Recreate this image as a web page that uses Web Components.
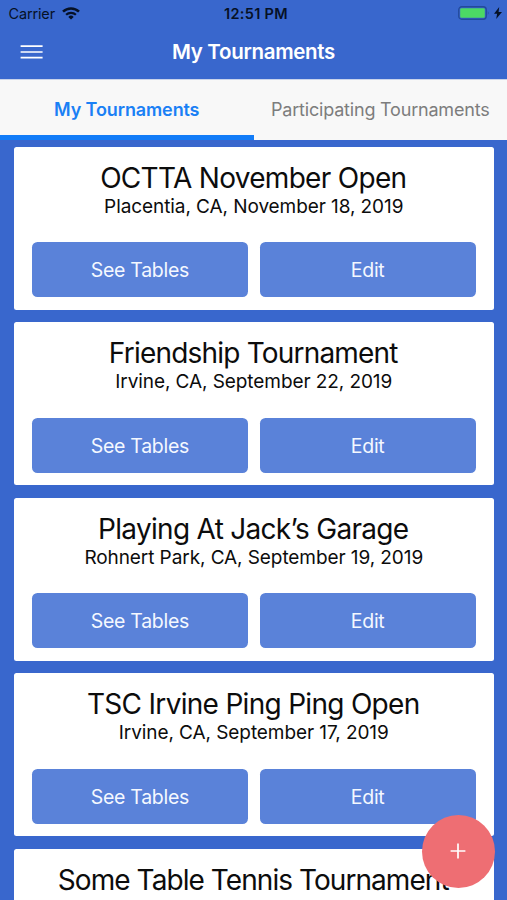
<!DOCTYPE html>
<html lang="en">
<head>
<meta charset="utf-8">
<title>My Tournaments</title>
<style>
  html, body { margin: 0; height: 100%; overflow: hidden; }
  body { font-family: Inter, "Liberation Sans", sans-serif; background: #3967cd; }
</style>
</head>
<body>
<tournament-app>
  <status-bar slot="top" carrier="Carrier" time="12:51 PM"></status-bar>
  <nav-header slot="top">My Tournaments</nav-header>
  <tab-bar slot="top">
    <tab-item active>My Tournaments</tab-item>
    <tab-item>Participating Tournaments</tab-item>
  </tab-bar>
  <tournament-card>
    OCTTA November Open
    <span slot="place">Placentia, CA, November 18, 2019</span>
  </tournament-card>
  <tournament-card style="--title-spacing: -0.8px">
    Friendship Tournament
    <span slot="place">Irvine, CA, September 22, 2019</span>
  </tournament-card>
  <tournament-card>
    Playing At Jack’s Garage
    <span slot="place">Rohnert Park, CA, September 19, 2019</span>
  </tournament-card>
  <tournament-card>
    TSC Irvine Ping Ping Open
    <span slot="place">Irvine, CA, September 17, 2019</span>
  </tournament-card>
  <tournament-card collapsed style="--title-spacing: -0.94px">
    Some Table Tennis Tournament
  </tournament-card>
  <add-button slot="fab"></add-button>
</tournament-app>

<script>
  // Every element here is static markup + styles, so one helper is enough.
  function define(name, html, setup) {
    const template = document.createElement('template');
    template.innerHTML = html;
    customElements.define(name, class extends HTMLElement {
      constructor() {
        super();
        this.attachShadow({ mode: 'open' });
        this.shadowRoot.appendChild(template.content.cloneNode(true));
      }
      connectedCallback() {
        if (setup) setup(this, this.shadowRoot);
      }
    });
  }

  define('tournament-app', `
    <style>
      :host {
        display: flex;
        flex-direction: column;
        height: 900px;
        overflow: hidden;
        position: relative;
        background: #3967cd;
      }
      main {
        flex: 1;
        min-height: 0;
        overflow: hidden;
        display: flex;
        flex-direction: column;
        gap: 12.5px;
        padding: 6.5px 13px 0 13.5px;
      }
    </style>
    <slot name="top"></slot>
    <main><slot></slot></main>
    <slot name="fab"></slot>
  `);

  define('status-bar', `
    <style>
      :host {
        display: grid;
        grid-template-columns: 1fr auto 1fr;
        align-items: center;
        flex: none;
        height: 27px;
        padding: 0 5px 0 8.5px;
        color: #061126;
        font-size: 14.5px;
      }
      .left, .right { display: flex; align-items: center; }
      .left { gap: 7px; }
      .carrier { letter-spacing: -0.15px; }
      .right { justify-content: flex-end; gap: 4px; }
      .time { font-weight: 600; letter-spacing: 0.3px; padding-left: 1.5px; }
      svg { display: block; margin-bottom: 1px; }
    </style>
    <div class="left">
      <span class="carrier"></span>
      <svg width="18" height="13" viewBox="0 0 18 13" fill="none" stroke="currentColor">
        <path d="M1 4.7a11.4 11.4 0 0 1 16 0" stroke-width="2.5"/>
        <path d="M4.1 7.8a7 7 0 0 1 9.8 0" stroke-width="2.2"/>
        <path d="M9 12.6 6.3 9.9a3.9 3.9 0 0 1 5.4 0z" fill="currentColor" stroke="none"/>
      </svg>
    </div>
    <span class="time"></span>
    <div class="right">
      <svg width="32" height="14" viewBox="0 0 32 14">
        <rect x=".75" y=".75" width="27.5" height="12.5" rx="3" fill="none" stroke="#234a9a" stroke-width="1.3"/>
        <rect x="2.2" y="2.2" width="24.6" height="9.6" rx="1.4" fill="#4cd964"/>
        <path d="M29.8 4.8q1.6 2.2 0 4.4z" fill="#234a9a"/>
      </svg>
      <svg width="8" height="12" viewBox="0 0 8 12">
        <path d="M5.2 0 0 6.8h3.1L2.2 12 8 4.9H4.6z" fill="currentColor"/>
      </svg>
    </div>
  `, (host, root) => {
    root.querySelector('.carrier').textContent = host.getAttribute('carrier');
    root.querySelector('.time').textContent = host.getAttribute('time');
  });

  define('nav-header', `
    <style>
      :host {
        display: grid;
        grid-template-columns: 1fr auto 1fr;
        align-items: center;
        flex: none;
        height: 51.5px;
        padding: 0 20px 2px;
        box-sizing: border-box;
        color: #fff;
      }
      h1 {
        margin: 0;
        font-size: 20.5px;
        line-height: 24px;
        font-weight: 600;
        letter-spacing: -0.3px;
      }
      svg { display: block; }
    </style>
    <svg width="23" height="16" viewBox="0 0 23 16" stroke="#fff" stroke-width="1.7">
      <path d="M.6 2.2h22M.6 8h22M.6 13.7h22"/>
    </svg>
    <h1><slot></slot></h1>
  `);

  define('tab-bar', `
    <style>
      :host {
        display: flex;
        flex: none;
        height: 61.5px;
        box-sizing: border-box;
        border-top: 1px solid #c9d3ea;
        background: #f8f8f8;
      }
    </style>
    <slot></slot>
  `);

  define('tab-item', `
    <style>
      :host {
        flex: 1 0 0;
        display: flex;
        align-items: center;
        justify-content: center;
        box-sizing: border-box;
        padding-top: 5px;
        border-bottom: 5px solid transparent;
        color: #7d7d7d;
        font-size: 18px;
        letter-spacing: -0.2px;
        white-space: nowrap;
      }
      :host([active]) {
        color: #1a80f5;
        font-weight: 600;
        letter-spacing: -0.12px;
        border-bottom-color: #127cf8;
      }
    </style>
    <span><slot></slot></span>
  `);

  define('flat-button', `
    <style>
      :host { display: block; flex: 1 0 0; }
      button {
        display: block;
        width: 100%;
        height: 55px;
        padding: 1px 0 0;
        border: none;
        border-radius: 5.5px;
        background: #5a82d9;
        color: #f4f8ff;
        font: 400 19.5px/54px Inter, "Liberation Sans", sans-serif;
        letter-spacing: -0.28px;
      }
    </style>
    <button type="button"><slot></slot></button>
  `);

  define('tournament-card', `
    <style>
      :host {
        display: block;
        flex: none;
        height: 163px;
        box-sizing: border-box;
        padding: 14px 18.5px 0;
        border-radius: 2.5px;
        background: #fff;
        color: #0c0c0c;
        text-align: center;
        white-space: nowrap;
      }
      h2 {
        margin: 0 0 0 -1px;
        font-size: 28px;
        line-height: 34px;
        font-weight: 400;
        letter-spacing: var(--title-spacing, -0.7px);
      }
      p {
        margin: 0;
        height: 24px;
        font-size: 19px;
        line-height: 24px;
        letter-spacing: -0.08px;
      }
      .actions { display: flex; gap: 12px; margin-top: 23.5px; }
      :host([collapsed]) .actions { display: none; }
    </style>
    <h2><slot></slot></h2>
    <p><slot name="place"></slot></p>
    <div class="actions">
      <flat-button>See Tables</flat-button>
      <flat-button>Edit</flat-button>
    </div>
  `);

  define('add-button', `
    <style>
      :host {
        position: absolute;
        right: 12.5px;
        bottom: 12.5px;
        width: 73px;
        height: 73px;
      }
      button {
        display: flex;
        align-items: center;
        justify-content: center;
        width: 100%;
        height: 100%;
        padding: 0;
        border: none;
        border-radius: 50%;
        background: #ee6e73;
      }
    </style>
    <button type="button" aria-label="Add tournament">
      <svg width="16" height="16" viewBox="0 0 16 16" stroke="#fff" stroke-width="1.7">
        <path d="M8 .6v14.8M.6 8h14.8"/>
      </svg>
    </button>
  `);
</script>
</body>
</html>
